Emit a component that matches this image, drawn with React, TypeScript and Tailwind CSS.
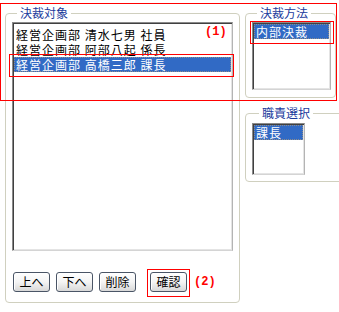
import React from "react";

type ListProps = {
  items: string[];
  selected: number;
  className: string;
};

function ListBox({ items, selected, className }: ListProps) {
  return (
    <div
      className={`border border-t-[#8a8a8a] border-l-[#8a8a8a] border-r-[#b4b4b4] border-b-[#d4d4d4] bg-white p-[1px] shadow-[inset_1px_1px_0_#404040,inset_-1px_-1px_0_#e4e4e4] ${className}`}
    >
      {items.map((item, i) =>
        i === selected ? (
          <div
            key={item}
            className="h-[15px] overflow-hidden whitespace-nowrap bg-[#316ac5] pl-[2px] text-[12px] leading-[15px] tracking-[1px] text-white outline-1 -outline-offset-1 outline-dotted outline-[#8c8c8c]"
          >
            {item}
          </div>
        ) : (
          <div
            key={item}
            className="h-[15px] overflow-hidden whitespace-nowrap pl-[2px] text-[12px] leading-[15px] tracking-[1px]"
          >
            {item}
          </div>
        )
      )}
    </div>
  );
}

function XpButton({ label }: { label: string }) {
  return (
    <button
      type="button"
      className="h-[20px] w-[37px] rounded-[3px] border border-[#4a5566] bg-linear-to-b from-white via-[#f4f4f4] to-[#d8d8d8] text-[12px] leading-[18px] text-black shadow-[inset_1px_1px_0_#ffffff]"
    >
      {label}
    </button>
  );
}

export default function App() {
  return (
    <div className="relative h-[312px] w-[339px] overflow-hidden bg-white font-['Noto_Sans_CJK_JP','Noto_Sans',sans-serif] text-[12px] text-black">
      <div className="flex gap-[5px] pl-[5px] pt-[6px]">
        {/* 決裁対象 */}
        <fieldset className="h-[297px] w-[235px] shrink-0 rounded-[4px] border border-[#d0d0bf] px-[6px]">
          <legend className="ml-[5px] px-[3px] text-[12px] leading-[14px] text-[#1a3a9c]">
            決裁対象
          </legend>

          <ListBox
            className="mt-[2px] h-[229px] w-[221px] pt-[4px]"
            items={[
              "経営企画部 清水七男 社員",
              "経営企画部 阿部八起 係長",
              "経営企画部 高橋三郎 課長",
            ]}
            selected={2}
          />

          <div className="ml-[1px] mt-[21px] flex h-[20px] items-start">
            <XpButton label="上へ" />
            <div className="ml-[6px]">
              <XpButton label="下へ" />
            </div>
            <div className="ml-[6px]">
              <XpButton label="削除" />
            </div>
            <div className="-mt-[3px] ml-[11px] border border-[#ff0000] px-[2px] pb-[4px] pt-[2px]">
              <XpButton label="確認" />
            </div>
            <span className="ml-[4px] mt-[3px] font-['Liberation_Mono',monospace] text-[12px] font-bold leading-[14px] text-[#ff0000]">
              (2)
            </span>
          </div>
        </fieldset>

        <div className="flex flex-col">
          {/* 決裁方法 */}
          <fieldset className="h-[92px] w-[91px] rounded-[4px] border border-[#d0d0bf] pl-[6px]">
            <legend className="ml-[5px] px-[3px] text-[12px] leading-[14px] text-[#1a3a9c]">
              決裁方法
            </legend>
            <ListBox
              className="mt-[2px] h-[68px] w-[79px]"
              items={["内部決裁"]}
              selected={0}
            />
          </fieldset>

          {/* 職責選択 */}
          <fieldset className="mt-[8px] h-[76px] w-[100px] rounded-[4px] border border-[#d0d0bf] pl-[6px]">
            <legend className="ml-[7px] px-[3px] text-[12px] leading-[14px] text-[#1a3a9c]">
              職責選択
            </legend>
            <ListBox
              className="mt-[3px] h-[52px] w-[53px]"
              items={["課長"]}
              selected={0}
            />
          </fieldset>
        </div>
      </div>

      {/* annotations */}
      <div className="pointer-events-none absolute left-0 top-[3px] h-[98px] w-[337px] border border-[#ff0000]" />
      <div className="pointer-events-none absolute left-[9px] top-[54px] h-[23px] w-[225px] border border-[#ff0000]" />
      <div className="pointer-events-none absolute left-[250px] top-[21px] h-[23px] w-[84px] border border-[#ff0000]" />
      <span className="absolute left-[205px] top-[25px] font-['Liberation_Mono',monospace] text-[12px] font-bold leading-[14px] text-[#ff0000]">
        (1)
      </span>
    </div>
  );
}
